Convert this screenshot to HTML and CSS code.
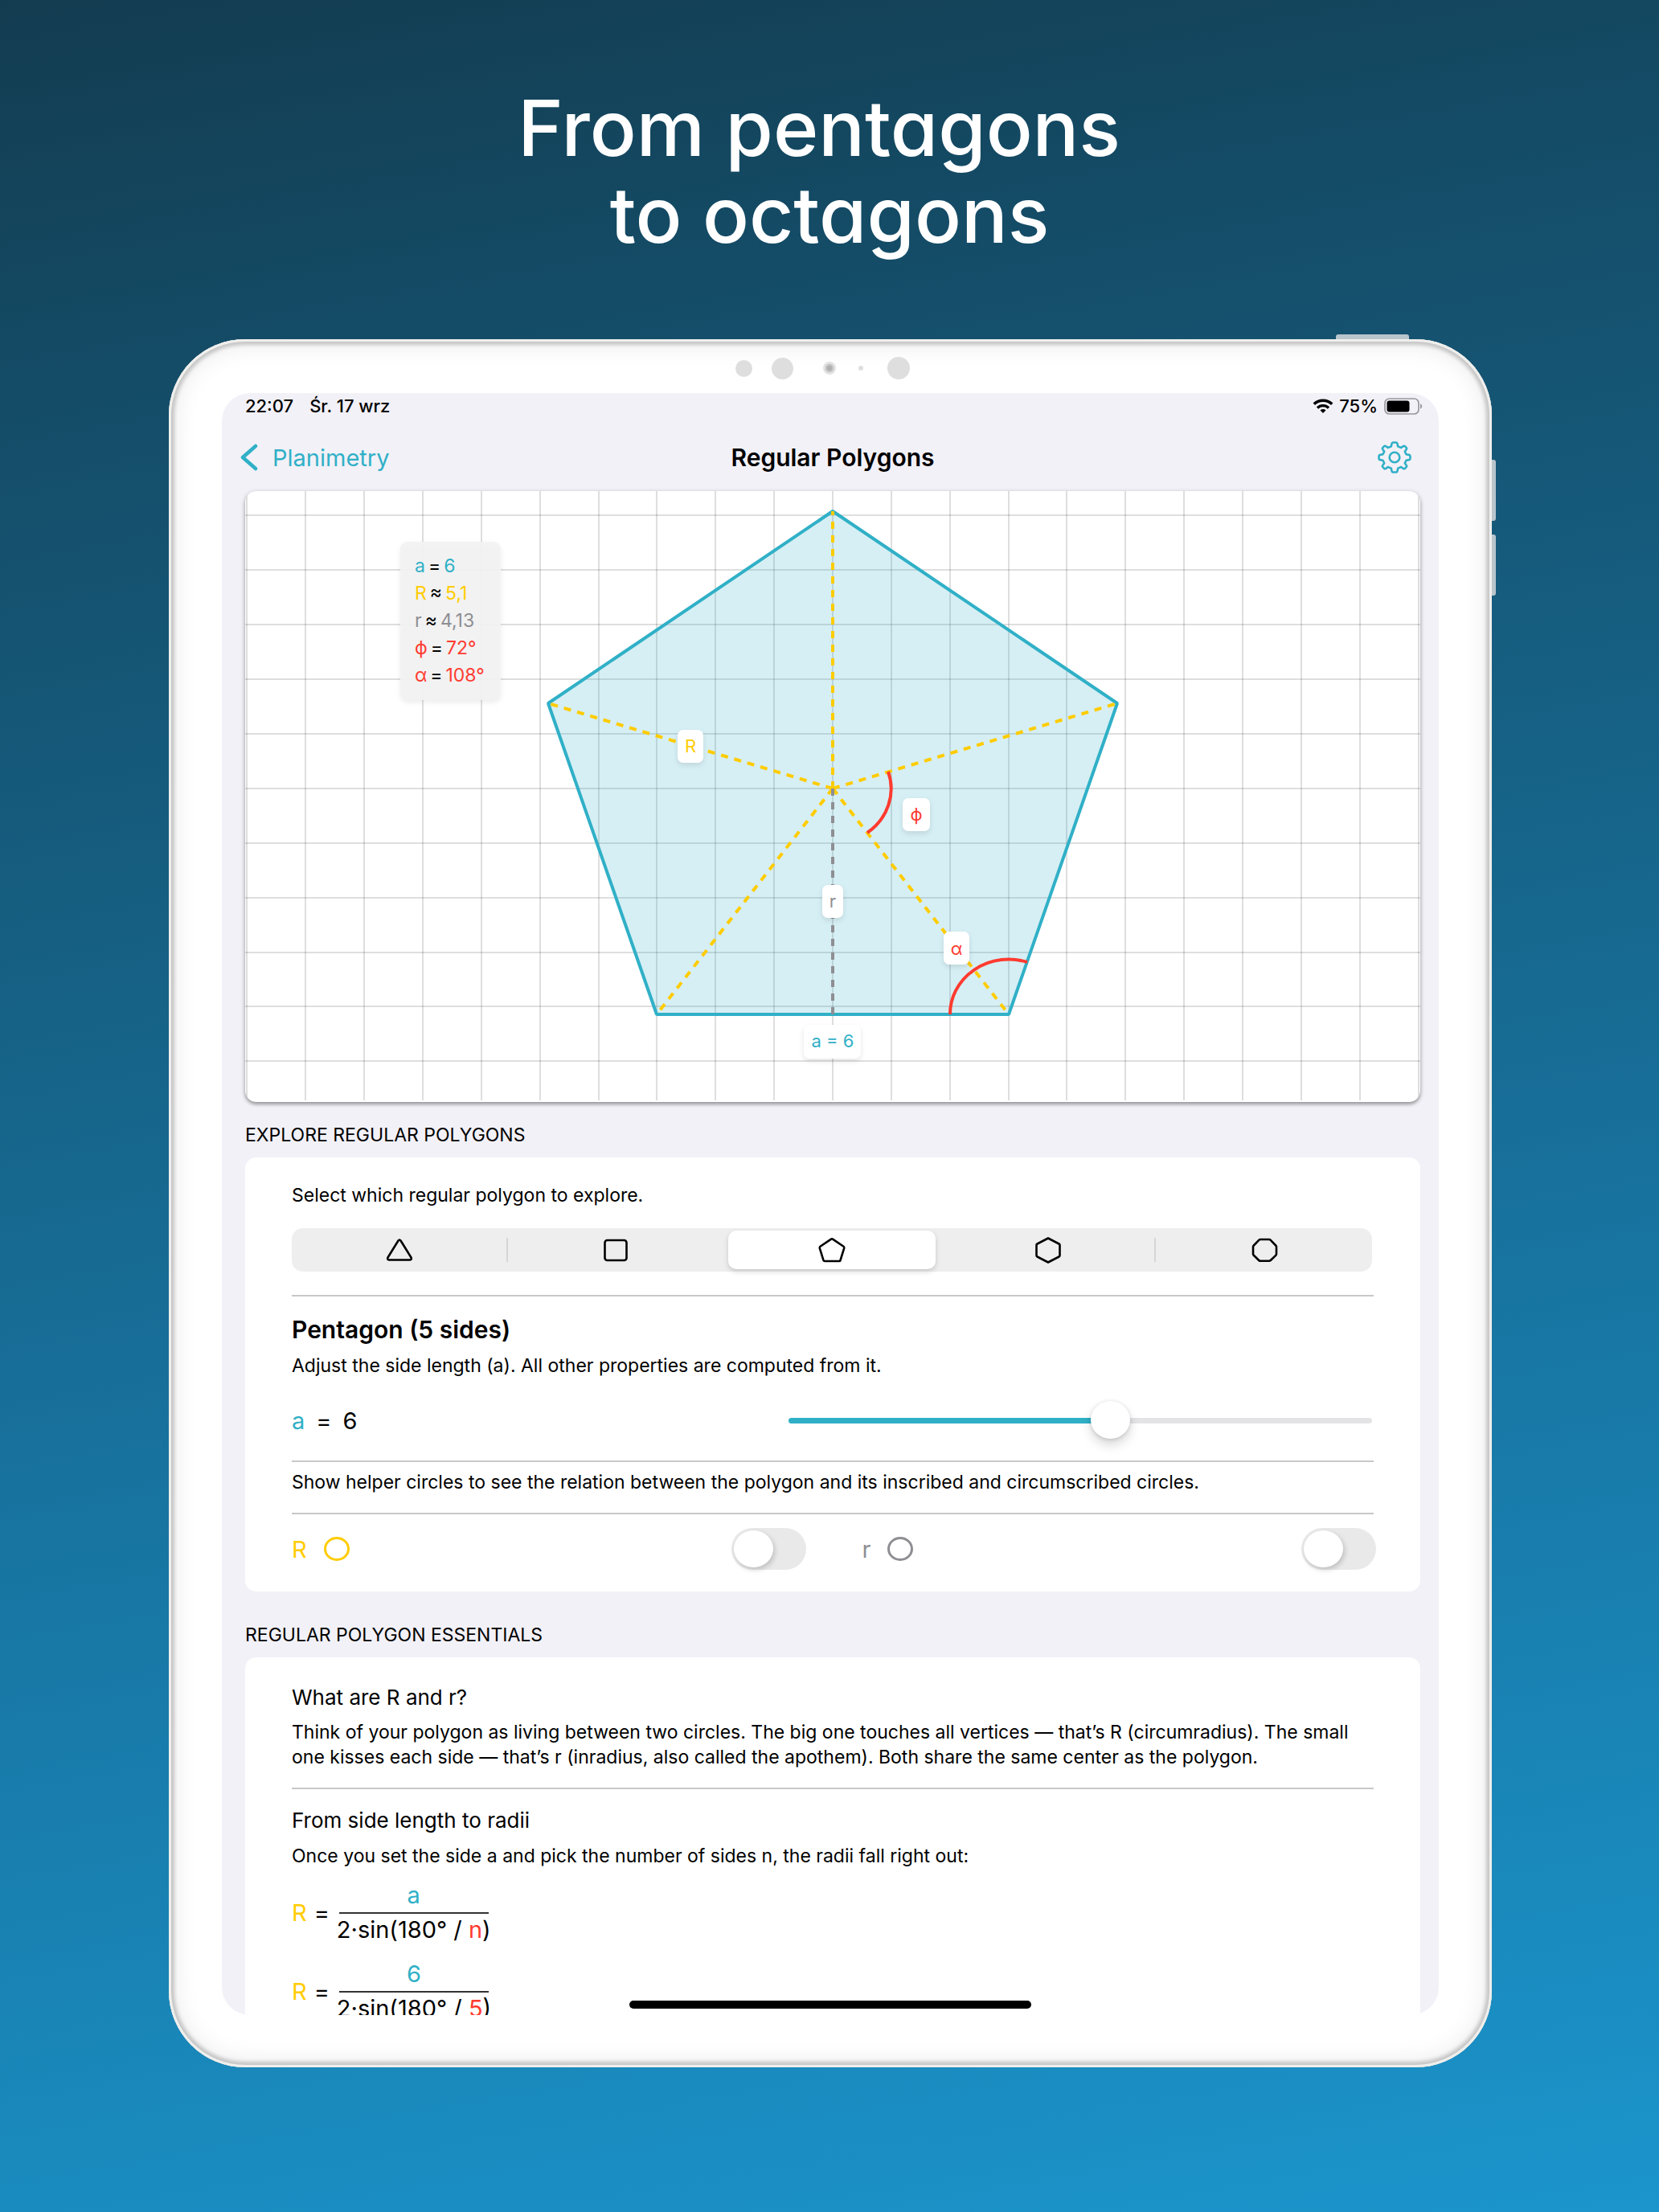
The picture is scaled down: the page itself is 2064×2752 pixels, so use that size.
FILE: index.html
```
<!DOCTYPE html>
<html lang="en">
<head>
    <meta charset="UTF-8">
    <title>Regular Polygons</title>
    <link rel="stylesheet" href="styles.css">
</head>
<body>
    <h1>From pentagons&nbsp;<br>to octagons</h1>

    <div class="device">
        <span class="side-button power"></span>
        <span class="side-button volume-up"></span>
        <span class="side-button volume-down"></span>
        <div class="camera">
            <i class="dot small"></i>
            <i class="dot medium"></i>
            <i class="dot lens"></i>
            <i class="dot tiny"></i>
            <i class="dot large"></i>
        </div>

        <div class="screen">
            <div class="status-bar">
                <span>22:07</span>
                <span class="date">Śr. 17 wrz</span>
                <svg class="wifi" viewBox="0 0 26 18" width="26" height="18">
                    <path d="M1.800 6.800A16 16 0 0 1 24.200 6.800" fill="none" stroke="#000" stroke-width="3.600"/>
                    <path d="M6 11.500A10 10 0 0 1 20 11.500" fill="none" stroke="#000" stroke-width="3.400"/>
                    <path d="M13 18L9.500 14.500A5 5 0 0 1 16.500 14.500Z"/>
                </svg>
                <span>75%</span>
                <svg class="battery" viewBox="0 0 48 21" width="48" height="21">
                    <rect x="1" y="1" width="42" height="19" rx="5.500" fill="none" stroke="#98989c" stroke-width="1.700"/>
                    <rect x="3.500" y="3.500" width="28" height="14" rx="3"/>
                    <path d="M45 7q4.500 3.500 0 7z" fill="#98989c"/>
                </svg>
            </div>

            <main>
                <nav>
                    <a class="back" href="#">
                        <svg viewBox="0 0 22 34" width="22" height="34"><path d="M19 3L3 17L19 31" fill="none" stroke="#30b0c7" stroke-width="4.500" stroke-linecap="round" stroke-linejoin="round"/></svg>
                        Planimetry
                    </a>
                    <span class="title">Regular Polygons</span>
                    <button class="settings" type="button" aria-label="Settings">
                        <svg viewBox="-21 -21 42 42" width="42" height="42" fill="none" stroke="#30b0c7" stroke-width="2.600" stroke-linejoin="round">
                            <path d="M-2 -18.500H2Q3.200 -18.500 3.500 -17L4.200 -13.600L8.200 -12L10.800 -13.900Q12 -14.700 12.900 -13.800L14.800 -11.900Q15.600 -11 14.800 -9.900L12.800 -7.200L14.500 -3.700L17.900 -3.100Q19.500 -2.800 19.500 -1.500V1.500Q19.500 2.800 17.900 3.100L14.500 3.700L12.800 7.200L14.800 9.900Q15.600 11 14.800 11.900L12.900 13.800Q12 14.700 10.800 13.900L8.200 12L4.200 13.600L3.500 17Q3.200 18.500 2 18.500H-2Q-3.200 18.500 -3.500 17L-4.200 13.600L-8.200 12L-10.800 13.900Q-12 14.700 -12.900 13.800L-14.800 11.900Q-15.600 11 -14.800 9.900L-12.800 7.200L-14.500 3.700L-17.900 3.100Q-19.500 2.800 -19.500 1.500V-1.500Q-19.500 -2.800 -17.900 -3.100L-14.500 -3.700L-12.800 -7.200L-14.800 -9.900Q-15.600 -11 -14.800 -11.900L-12.900 -13.800Q-12 -14.700 -10.800 -13.900L-8.200 -12L-4.200 -13.600L-3.500 -17Q-3.200 -18.500 -2 -18.500Z"/>
                            <circle r="6.300"/>
                        </svg>
                    </button>
                </nav>

                <!-- one grid unit is 73 x 68, the pentagon's centre is at 731,370 -->
                <svg class="graph" viewBox="0 0 1462 760">
                    <g class="grid">
                        <path d="M2 0V758M75 0V758M148 0V758M221 0V758M294 0V758M367 0V758M440 0V758M512 0V758M585 0V758M658 0V758M731 0V758M804 0V758M877 0V758M950 0V758M1022 0V758M1095 0V758M1168 0V758M1241 0V758M1314 0V758M1387 0V758M1460 0V758"/>
                        <path d="M0 30H1462M0 98H1462M0 166H1462M0 234H1462M0 302H1462M0 370H1462M0 438H1462M0 506H1462M0 574H1462M0 641H1462M0 709H1462"/>
                    </g>
                    <polygon class="pentagon" points="731,25 1085,264 950,651 512,651 377,264"/>
                    <path class="circumradius" d="M731 370V25M731 370L1085 264M731 370L950 651M731 370L512 651M731 370L377 264"/>
                    <path class="inradius" d="M731 370V651"/>
                    <path class="angle" d="M800 349A73 68 0 0 1 774 425"/>
                    <path class="angle" d="M877 651A73 68 0 0 1 973 586"/>

                    <g class="tag">
                        <rect x="538" y="297" width="32" height="41" rx="7"/>
                        <rect x="718" y="490" width="26" height="41" rx="7"/>
                        <rect x="818" y="382" width="34" height="41" rx="7"/>
                        <rect x="869" y="548" width="32" height="41" rx="7"/>
                        <rect x="695" y="664" width="71" height="42" rx="7"/>
                    </g>
                    <g class="tag-text">
                        <text class="yellow" x="554" y="325">R</text>
                        <text class="gray" x="731" y="518">r</text>
                        <text class="red" x="835" y="410">ϕ</text>
                        <text class="red" x="885" y="577">α</text>
                        <text class="teal" x="731" y="692">a = 6</text>
                    </g>

                    <rect class="legend" x="193" y="63" width="125" height="197" rx="9"/>
                    <g class="legend-text">
                        <text x="211" y="101"><tspan class="teal">a</tspan><tspan dx="4">=</tspan><tspan class="teal" dx="4">6</tspan></text>
                        <text x="211" y="135"><tspan class="yellow">R</tspan><tspan dx="4">≈</tspan><tspan class="yellow" dx="4">5,1</tspan></text>
                        <text x="211" y="169"><tspan class="gray">r</tspan><tspan dx="4">≈</tspan><tspan class="gray" dx="4">4,13</tspan></text>
                        <text x="211" y="203"><tspan class="red">ϕ</tspan><tspan dx="4">=</tspan><tspan class="red" dx="4">72°</tspan></text>
                        <text x="211" y="237"><tspan class="red">α</tspan><tspan dx="4">=</tspan><tspan class="red" dx="4">108°</tspan></text>
                    </g>
                </svg>

                <h2>EXPLORE REGULAR POLYGONS</h2>
                <section class="card explore">
                    <p>Select which regular polygon to explore.</p>
                    <div class="segments" role="radiogroup" aria-label="Polygon">
                        <label><input type="radio" name="polygon" aria-label="Triangle">
                            <svg viewBox="0 0 36 36"><path d="M16.500 6.500Q18 4.500 19.500 6.500L32.500 27.500Q33.500 30.500 31 30.500H5Q2.500 30.500 3.500 27.500Z"/></svg></label>
                        <label><input type="radio" name="polygon" aria-label="Square">
                            <svg viewBox="0 0 36 36"><rect x="4.500" y="6" width="27" height="25" rx="3"/></svg></label>
                        <label><input type="radio" name="polygon" aria-label="Pentagon" checked>
                            <svg viewBox="0 0 36 36"><path d="M17 4.600Q18 4 19 4.600L32.500 13.800Q33.500 14.500 33.200 15.800L28.500 31Q28.200 32 27 32H9Q7.800 32 7.500 31L2.800 15.800Q2.500 14.500 3.500 13.800Z"/></svg></label>
                        <label><input type="radio" name="polygon" aria-label="Hexagon">
                            <svg viewBox="0 0 36 36"><path d="M18 3.500L31.500 10.500Q32.500 11 32.500 12V25Q32.500 26 31.500 26.500L18 33.500L4.500 26.500Q3.500 26 3.500 25V12Q3.500 11 4.500 10.500Z"/></svg></label>
                        <label><input type="radio" name="polygon" aria-label="Octagon">
                            <svg viewBox="0 0 36 36"><path d="M13 5H24Q25 5 25.800 5.800L32.200 12.500Q33 13.300 33 14.300V23Q33 24 32.200 24.800L25.800 31Q25 31.800 24 31.800H13Q12 31.800 11.200 31L4.800 24.800Q4 24 4 23V14.300Q4 13.300 4.800 12.500L11.200 5.800Q12 5 13 5Z"/></svg></label>
                    </div>
                    <hr>
                    <h3 class="strong">Pentagon (5 sides)</h3>
                    <p>Adjust the side length (a). All other properties are computed from it.</p>
                    <div class="slider-row">
                        <label for="side"><span class="teal">a</span> <span>=</span> <span>6</span></label>
                        <input type="range" id="side" min="1" max="10" value="6">
                    </div>
                    <hr>
                    <p>Show helper circles to see the relation between the polygon and its inscribed and circumscribed circles.</p>
                    <hr>
                    <div class="switches">
                        <label class="yellow">R <i class="ring"></i><input type="checkbox" role="switch"></label>
                        <label class="gray">r <i class="ring"></i><input type="checkbox" role="switch"></label>
                    </div>
                </section>

                <h2>REGULAR POLYGON ESSENTIALS</h2>
                <section class="card essentials">
                    <h3>What are R and r?</h3>
                    <p>Think of your polygon as living between two circles. The big one touches all vertices — that’s R (circumradius). The small one kisses each side — that’s r (inradius, also called the apothem). Both share the same center as the polygon.</p>
                    <hr>
                    <h3>From side length to radii</h3>
                    <p>Once you set the side a and pick the number of sides n, the radii fall right out:</p>
                    <div class="formula">
                        <span class="yellow">R</span> <span>=</span>
                        <span class="fraction">
                            <span class="teal top">a</span>
                            <span>2·sin(180° / <span class="red">n</span>)</span>
                        </span>
                    </div>
                    <div class="formula">
                        <span class="yellow">R</span> <span>=</span>
                        <span class="fraction">
                            <span class="teal top">6</span>
                            <span>2·sin(180° / <span class="red">5</span>)</span>
                        </span>
                    </div>
                </section>
            </main>
            <span class="home-bar"></span>
        </div>
    </div>
</body>
</html>
```
FILE: styles.css
```
* {
    box-sizing: border-box;
}
body {
    margin: 0;
    height: 100vh;
    display: flex;
    flex-direction: column;
    background: linear-gradient(170deg, #133c50 0%, #144a64 14%, #1878a6 66%, #1b95cc 100%);
    font-family: Inter, "Liberation Sans", sans-serif;
    font-size: 23px;
    line-height: 31px;
    color: #000;
}
h1 {
    margin: 105px 0 101px;
    text-align: center;
    color: #fff;
    font-size: 96px;
    line-height: 108px;
    font-weight: 500;
    font-feature-settings: "cv11";
}
h2, h3, p {
    margin: 0;
    font-weight: 400;
}
hr {
    height: 2px;
    margin: 0;
    border: 0;
    background: #c8c8cb;
}
.teal { color: #30b0c7; fill: #30b0c7; }
.yellow { color: #ffcc00; fill: #ffcc00; }
.gray { color: #8e8e93; fill: #8e8e93; }
.red { color: #ff3b30; fill: #ff3b30; }

/* tablet */
.device {
    position: relative;
    flex: 1;
    min-height: 0;
    display: flex;
    flex-direction: column;
    margin: 0 208px 180px 210px;
    padding: 0 66px 65px;
    border-radius: 95px;
    background: #fff;
    box-shadow: inset 0 0 0 3px #efefed, inset 0 0 4px 7px #c6c6c6, inset 0 0 30px 8px #ececec;
}
.side-button {
    position: absolute;
    background: #b9c5cc;
}
.power {
    top: -6px;
    right: 103px;
    width: 91px;
    height: 6px;
    border-radius: 3px 3px 0 0;
}
.volume-up, .volume-down {
    right: -5px;
    top: 150px;
    width: 5px;
    height: 76px;
    border-radius: 0 3px 3px 0;
}
.volume-down {
    top: 243px;
}
.camera {
    flex: none;
    height: 67px;
    padding: 5px 20px 0 0;
    display: flex;
    align-items: center;
    justify-content: center;
}
.dot {
    border-radius: 50%;
    background: #dedede;
}
.small { width: 21px; height: 21px; margin-right: 24px; }
.medium { width: 27px; height: 27px; margin-right: 37px; }
.lens { width: 16px; height: 16px; margin-right: 28px; background: radial-gradient(#b0b0b0 25%, #c4c4c4 30% 42%, #e2e2e2 50%); }
.tiny { width: 6px; height: 6px; margin-right: 30px; }
.large { width: 28px; height: 28px; }

.screen {
    position: relative;
    flex: 1;
    min-height: 0;
    overflow: hidden;
    border-radius: 35px;
    background: #f2f1f7;
}
.status-bar {
    height: 32px;
    padding: 0 20px 0 29px;
    display: flex;
    align-items: center;
    font-size: 22px;
    font-weight: 500;
}
.date {
    margin: 0 auto 0 20px;
}
.wifi { margin-right: 7px; }
.battery { margin-left: 8px; }

main {
    padding: 0 23px 0 29px;
}
nav {
    height: 90px;
    padding-top: 6px;
    display: grid;
    grid-template-columns: 1fr auto 1fr;
    align-items: center;
    font-size: 29px;
}
.back {
    display: flex;
    align-items: center;
    gap: 18px;
    margin-left: -6px;
    color: #30b0c7;
    text-decoration: none;
}
.title {
    font-size: 30px;
    font-weight: 600;
}
.settings {
    justify-self: end;
    margin-right: 11px;
    padding: 0;
    border: 0;
    background: none;
}
.settings svg {
    display: block;
}

/* drawing */
.graph {
    display: block;
    width: 100%;
    border-radius: 14px;
    background: #fff;
    box-shadow: 0 3px 4px rgba(0, 0, 0, 0.3), 0 1px 6px rgba(0, 0, 0, 0.15);
}
.grid {
    fill: none;
    stroke: #000;
    stroke-opacity: 0.13;
    stroke-width: 2;
}
.pentagon {
    fill: rgba(48, 176, 199, 0.2);
    stroke: #30b0c7;
    stroke-width: 4;
    stroke-linejoin: bevel;
}
.circumradius, .inradius {
    fill: none;
    stroke: #ffcc00;
    stroke-width: 4;
    stroke-dasharray: 9 8;
}
.inradius {
    stroke: #8e8e93;
}
.angle {
    fill: none;
    stroke: #ff3b30;
    stroke-width: 4;
}
.tag rect {
    fill: #fff;
    filter: drop-shadow(0 3px 3px rgba(0, 0, 0, 0.1));
}
.tag-text {
    font-size: 22px;
    text-anchor: middle;
}
.legend {
    fill: #f2f2f2;
    fill-opacity: 0.92;
    filter: drop-shadow(0 3px 3px rgba(0, 0, 0, 0.08));
}
.legend-text {
    font-size: 23px;
}

/* sections */
h2 {
    margin: 27px 0 14px;
    font-size: 23px;
    line-height: 28px;
}
.explore + h2 {
    margin-top: 40px;
}
.card {
    padding: 32px 58px 27px;
    border-radius: 14px;
    background: #fff;
}
h3 {
    font-size: 26px;
    line-height: 32px;
}
h3 + p {
    margin-top: 12px;
}
.strong {
    margin-top: 23px;
    font-size: 30px;
    line-height: 36px;
    font-weight: 600;
}
.segments {
    display: grid;
    grid-template-columns: repeat(5, 1fr);
    height: 54px;
    margin: 25px 2px 29px 0;
    border-radius: 14px;
    background: #eee;
}
.segments label {
    position: relative;
    display: flex;
    align-items: center;
    justify-content: center;
    margin: 3px 5px;
    border-radius: 10px;
}
.segments input {
    position: absolute;
    opacity: 0;
}
.segments svg {
    width: 36px;
    height: 36px;
    fill: none;
    stroke: #000;
    stroke-width: 2.6;
    stroke-linejoin: round;
}
.segments label:has(:checked) {
    background: #fff;
    box-shadow: 0 3px 6px rgba(0, 0, 0, 0.16);
}
.segments label:nth-child(1)::after, .segments label:nth-child(4)::after {
    content: "";
    position: absolute;
    right: -5px;
    top: 9px;
    bottom: 9px;
    width: 2px;
    background: #d6d6d8;
}
.slider-row {
    height: 50px;
    margin: 27px 2px 25px 0;
    display: flex;
    align-items: center;
    justify-content: space-between;
    font-size: 29px;
}
.slider-row label {
    display: flex;
    gap: 14px;
}
input[type="range"] {
    appearance: none;
    width: 54%;
    height: 50px;
    margin: 0;
    background: none;
}
input[type="range"]::-webkit-slider-runnable-track {
    height: 7px;
    border-radius: 4px;
    background: linear-gradient(90deg, #30b0c7 55%, #e4e4e6 55%);
}
input[type="range"]::-webkit-slider-thumb {
    appearance: none;
    width: 49px;
    height: 47px;
    margin-top: -21px;
    border-radius: 50%;
    background: #fff;
    box-shadow: 0 8px 14px rgba(0, 0, 0, 0.15), 0 1px 5px rgba(0, 0, 0, 0.15);
}
hr + p {
    margin: 10px 0 22px;
}
.switches {
    display: grid;
    grid-template-columns: 1fr 1fr;
    gap: 70px;
    margin: 17px -3px 0 0;
    font-size: 29px;
}
.switches label {
    display: flex;
    align-items: center;
}
.ring {
    width: 32px;
    height: 30px;
    margin: 0 auto 0 21px;
    border: 3px solid;
    border-radius: 50%;
}
.switches input {
    appearance: none;
    width: 93px;
    height: 52px;
    margin: 0;
    padding: 3px;
    border-radius: 26px;
    background: #e9e9e9;
}
.switches input::before {
    content: "";
    display: block;
    width: 49px;
    height: 46px;
    border-radius: 50%;
    background: #fff;
    box-shadow: 2px 3px 6px rgba(0, 0, 0, 0.18);
}
.essentials {
    padding-top: 34px;
}
.essentials hr {
    margin: 22px 0 23px;
}
.essentials hr + h3 + p {
    margin-top: 13px;
}
.formula {
    display: flex;
    align-items: center;
    gap: 9px;
    margin-top: 15px;
    font-size: 29px;
    line-height: 36px;
}
.formula + .formula {
    margin-top: 19px;
}
.fraction {
    display: flex;
    flex-direction: column;
    text-align: center;
}
.top {
    margin: 0 3px 2px;
    padding-bottom: 3px;
    border-bottom: 2px solid #333;
}
.home-bar {
    position: absolute;
    left: 0;
    right: 0;
    bottom: 8px;
    width: 33%;
    height: 10px;
    margin: 0 auto;
    border-radius: 5px;
    background: #000;
}
```
